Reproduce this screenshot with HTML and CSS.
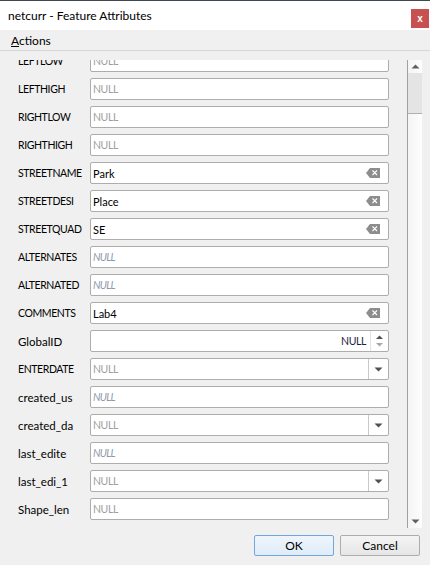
FILE: index.html
```html
<!DOCTYPE html>
<html>
<head>
<meta charset="utf-8">
<link rel="stylesheet" href="styles.css">
</head>
<body>
<div class="window">
  <div class="titlebar">
    <span class="title">netcurr - Feature Attributes</span>
    <span class="close">x</span>
  </div>
  <div class="menubar"><span class="menu"><u>A</u>ctions</span></div>
  <div class="main">
    <div class="viewport">
      <div class="form">
        <div class="row"><span class="label u">LEFTLOW</span><div class="field"><span class="ph">NULL</span></div></div>
        <div class="row"><span class="label u">LEFTHIGH</span><div class="field"><span class="ph">NULL</span></div></div>
        <div class="row"><span class="label u">RIGHTLOW</span><div class="field"><span class="ph">NULL</span></div></div>
        <div class="row"><span class="label u">RIGHTHIGH</span><div class="field"><span class="ph">NULL</span></div></div>
        <div class="row"><span class="label u">STREETNAME</span><div class="field"><span class="val">Park</span><svg class="clear" width="14" height="10" viewBox="0 0 14 10"><polygon points="4,0 14,0 14,10 4,10 0,5" fill="#8d8d8d"/><path d="M6.5 2.5 L11 7 M11 2.5 L6.5 7" stroke="#fff" stroke-width="1.1"/></svg></div></div>
        <div class="row"><span class="label u">STREETDESI</span><div class="field"><span class="val">Place</span><svg class="clear" width="14" height="10" viewBox="0 0 14 10"><polygon points="4,0 14,0 14,10 4,10 0,5" fill="#8d8d8d"/><path d="M6.5 2.5 L11 7 M11 2.5 L6.5 7" stroke="#fff" stroke-width="1.1"/></svg></div></div>
        <div class="row"><span class="label u">STREETQUAD</span><div class="field"><span class="val">SE</span><svg class="clear" width="14" height="10" viewBox="0 0 14 10"><polygon points="4,0 14,0 14,10 4,10 0,5" fill="#8d8d8d"/><path d="M6.5 2.5 L11 7 M11 2.5 L6.5 7" stroke="#fff" stroke-width="1.1"/></svg></div></div>
        <div class="row"><span class="label u">ALTERNATES</span><div class="field"><span class="ph it">NULL</span></div></div>
        <div class="row"><span class="label u">ALTERNATED</span><div class="field"><span class="ph it">NULL</span></div></div>
        <div class="row"><span class="label u">COMMENTS</span><div class="field"><span class="val">Lab4</span><svg class="clear" width="14" height="10" viewBox="0 0 14 10"><polygon points="4,0 14,0 14,10 4,10 0,5" fill="#8d8d8d"/><path d="M6.5 2.5 L11 7 M11 2.5 L6.5 7" stroke="#fff" stroke-width="1.1"/></svg></div></div>
        <div class="row"><span class="label">GlobalID</span><div class="field spin"><span class="spinval">NULL</span><span class="spinbtns"><svg width="9" height="14" viewBox="0 0 9 14"><polygon points="1,5 4.5,1.5 8,5" fill="#505050"/><polygon points="1,9 4.5,12.5 8,9" fill="#a8a8a8"/></svg></span></div></div>
        <div class="row"><span class="label u">ENTERDATE</span><div class="field combo"><span class="ph">NULL</span><span class="drop"><svg width="9" height="5" viewBox="0 0 9 5"><polygon points="0.5,0.5 8.5,0.5 4.5,4.5" fill="#505050"/></svg></span></div></div>
        <div class="row"><span class="label">created_us</span><div class="field"><span class="ph it">NULL</span></div></div>
        <div class="row"><span class="label">created_da</span><div class="field combo"><span class="ph">NULL</span><span class="drop"><svg width="9" height="5" viewBox="0 0 9 5"><polygon points="0.5,0.5 8.5,0.5 4.5,4.5" fill="#505050"/></svg></span></div></div>
        <div class="row"><span class="label">last_edite</span><div class="field"><span class="ph it">NULL</span></div></div>
        <div class="row"><span class="label">last_edi_1</span><div class="field combo"><span class="ph">NULL</span><span class="drop"><svg width="9" height="5" viewBox="0 0 9 5"><polygon points="0.5,0.5 8.5,0.5 4.5,4.5" fill="#505050"/></svg></span></div></div>
        <div class="row"><span class="label">Shape_len</span><div class="field"><span class="ph">NULL</span></div></div>
      </div>
    </div>
    <div class="scrollbar">
      <div class="sb-btn"><svg width="9" height="5" viewBox="0 0 9 5"><polygon points="0.5,4.5 8.5,4.5 4.5,0.5" fill="#606060"/></svg></div>
      <div class="sb-thumb"></div>
      <div class="sb-track"></div>
      <div class="sb-btn"><svg width="9" height="5" viewBox="0 0 9 5"><polygon points="0.5,0.5 8.5,0.5 4.5,4.5" fill="#606060"/></svg></div>
    </div>
  </div>
  <div class="buttons">
    <span class="btn ok">OK</span>
    <span class="btn">Cancel</span>
  </div>
</div>
</body>
</html>
```
FILE: styles.css
```css
html, body {
  margin: 0;
  padding: 0;
}
body {
  width: 430px;
  height: 565px;
  background: #f0f0f0;
  font-family: Lato, "Noto Sans", "Liberation Sans", sans-serif;
  font-size: 12px;
  color: #000;
  overflow: hidden;
}
.window {
  display: flex;
  flex-direction: column;
  height: 565px;
}
.titlebar {
  height: 29px;
  border-top: 1px solid #3e4852;
  background: #fff;
  display: flex;
  align-items: center;
  padding-left: 8px;
  padding-right: 1px;
}
.title {
  font-size: 12px;
  flex: 1;
  margin-top: -1px;
}
.close {
  width: 18px;
  height: 19px;
  background: #c75050;
  color: #fff;
  font-weight: bold;
  font-size: 10px;
  display: flex;
  align-items: center;
  justify-content: center;
  font-family: "Liberation Sans", sans-serif;
  margin-top: 5px;
}
.menubar {
  height: 20px;
  border-bottom: 1px solid #d7d7d7;
  display: flex;
  align-items: center;
  padding-left: 11px;
}
.main {
  display: flex;
  margin-top: 9px;
  height: 468px;
}
.viewport {
  width: 407px;
  overflow: hidden;
}
.form {
  margin-top: -10px;
  display: flex;
  flex-direction: column;
  gap: 6px;
}
.row {
  display: flex;
  align-items: center;
  height: 22px;
}
.label {
  flex: none;
  width: 72px;
  padding-left: 18px;
  font-size: 11.5px;
  white-space: nowrap;
}
.label.u {
  font-size: 10.5px;
  letter-spacing: -0.4px;
}
.field {
  flex: none;
  width: 295px;
  height: 20px;
  border: 1px solid #adadad;
  border-radius: 2px;
  background: #fff;
  display: flex;
  align-items: center;
  padding-left: 2px;
  box-sizing: content-box;
}
.field .val, .field .ph, .spinval {
  flex: 1;
  font-size: 11px;
}
.ph {
  color: #a0a0a0;
  letter-spacing: -0.4px;
  font-size: 10.5px;
}
.field .ph {
  font-size: 10.5px;
}
.ph.it {
  font-style: italic;
  color: #8e9aac;
  letter-spacing: -0.7px;
}
.clear {
  margin-right: 8px;
}
.spin {
  padding-left: 0;
  width: 297px;
}
.spinval {
  text-align: right;
  color: #1e1e46;
  padding-right: 4px;
  letter-spacing: -0.4px;
}
.field .spinval {
  font-size: 10.5px;
}
.spinbtns {
  width: 17px;
  height: 20px;
  display: flex;
  align-items: center;
  justify-content: center;
  border-left: 1px solid #e2e2e2;
}
.combo .drop {
  width: 19px;
  height: 20px;
  border-left: 1px solid #c9c9c9;
  display: flex;
  align-items: center;
  justify-content: center;
}
.scrollbar {
  width: 14px;
  border-left: 1px solid #a0a0a0;
  display: flex;
  flex-direction: column;
  background: linear-gradient(to right, #f4f4f4, #fdfdfd);
}
.sb-btn {
  height: 13px;
  display: flex;
  align-items: center;
  justify-content: center;
}
.sb-thumb {
  height: 40px;
  background: #e4e4e4;
  border-bottom: 1px solid #b0b0b0;
}
.sb-track {
  flex: 1;
}
.buttons {
  display: flex;
  justify-content: flex-end;
  gap: 6px;
  padding-right: 10px;
  margin-top: 7px;
}
.btn {
  width: 78px;
  height: 19px;
  border: 1px solid #adadad;
  border-radius: 2px;
  background: linear-gradient(#f4f4f4, #e6e6e6);
  display: flex;
  align-items: center;
  justify-content: center;
  font-size: 12px;
}
.btn.ok {
  border-color: #6fa8dc;
  background: linear-gradient(#eef5fc, #e0ecf8);
}
```
